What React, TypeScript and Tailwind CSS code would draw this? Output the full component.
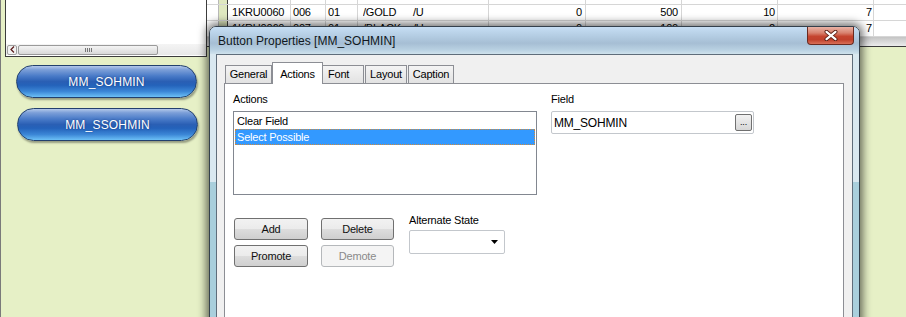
import React from "react";

function Cell({ w, children, right, pl, pr }: { w: string; children?: React.ReactNode; right?: boolean; pl?: string; pr?: string }) {
  return (
    <div className={`${w} ${right ? "justify-end" : "justify-start"} ${pl ?? ""} ${pr ?? ""} h-full flex items-center border-r border-[#d6d6d6] whitespace-nowrap overflow-hidden`}>
      {children}
    </div>
  );
}

function Row({ a, b, c, d, e, f, g, h, i }: { a: string; b: string; c: string; d: string; e: string; f: string; g: string; h: string; i: string }) {
  return (
    <div className="h-[16px] flex border-b border-[#d6d6d6] text-[11px] leading-[15px] text-black">
      <div className="w-[12px] h-full border-r border-[#b8b8b8] bg-white" />
      <div className="w-[9px] h-full border-r border-[#404040] bg-[#dfe8c0]" />
      <Cell w="w-[63px]" pl="pl-[4px]">{a}</Cell>
      <Cell w="w-[35px]" pl="pl-[2px]">{b}</Cell>
      <Cell w="w-[32px]" pl="pl-[2px]">{c}</Cell>
      <Cell w="w-[131px]" pl="pl-[5px]">
        <span className="inline-block w-[50px] overflow-hidden">{d}</span>
        <span>{e}</span>
      </Cell>
      <Cell w="w-[97px]" right pr="pr-[3px]">{f}</Cell>
      <Cell w="w-[96px]" right pr="pr-[3px]">{g}</Cell>
      <Cell w="w-[96px]" right pr="pr-[2px]">{h}</Cell>
      <Cell w="w-[96px]" right pr="pr-[1px]">{i}</Cell>
      <div className="flex-1 h-full" />
    </div>
  );
}

function Pill({ label, extra }: { label: string; extra?: string }) {
  return (
    <div
      className={`w-[181px] h-[33px] rounded-full border border-[#22406e] bg-[linear-gradient(to_bottom,#b3c8ea_0%,#7c9fd8_12%,#4a7bc8_32%,#2a5fb4_50%,#2462ba_62%,#3b86d6_82%,#6cc0f6_100%)] shadow-[1px_2px_2px_rgba(0,0,0,0.35)] flex items-center justify-center text-white text-[12px] tracking-[0.2px] [text-shadow:0_0_2px_rgba(0,30,90,0.6)] ${extra ?? ""}`}
    >
      {label}
    </div>
  );
}

function Btn({ label, disabled, w }: { label: string; disabled?: boolean; w: string }) {
  return (
    <div
      className={`${w} h-[22px] rounded-[3px] border flex items-center justify-center text-[11px] ${
        disabled
          ? "border-[#b5b8bb] bg-[#f4f4f4] text-[#8a8a8a]"
          : "border-[#707070] bg-[linear-gradient(to_bottom,#f2f2f2_0%,#ebebeb_50%,#dddddd_51%,#cfcfcf_100%)] text-[#101010]"
      }`}
    >
      {label}
    </div>
  );
}

export default function App() {
  return (
    <div className="relative w-[906px] h-[317px] overflow-hidden bg-[#e6f0c6] font-['Liberation_Sans',Arial,sans-serif] tracking-[-0.2px] flex">
      {/* Left pane */}
      <div className="w-[207px] h-full border-l border-[#7a7a7a] flex flex-col shrink-0">
        <div className="ml-[4px] w-[202px] h-[57px] bg-white border-x border-b border-[#3c3c3c] flex flex-col justify-end pb-[1px]">
          <div className="h-[11px] flex items-center bg-[linear-gradient(to_bottom,#f4f4f4,#e8e8e8)]">
            <div className="ml-[1px] w-[10px] h-[10px] border border-[#a0a0a0] rounded-[2px] bg-[#f2f2f2] flex items-center justify-center">
              <svg width="5" height="7" viewBox="0 0 5 7">
                <path d="M4 0.5 L1 3.5 L4 6.5" stroke="#5a1a1a" strokeWidth="1.2" fill="none" />
              </svg>
            </div>
            <div className="ml-[1px] w-[140px] h-[10px] border border-[#9a9a9a] rounded-[2px] bg-[linear-gradient(to_bottom,#f4f4f4,#d8d8d8)] flex items-center justify-center gap-[1px]">
              <div className="w-[1px] h-[4px] bg-[#777]" />
              <div className="w-[1px] h-[4px] bg-[#777]" />
              <div className="w-[1px] h-[4px] bg-[#777]" />
              <div className="w-[1px] h-[4px] bg-[#777]" />
            </div>
          </div>
        </div>
        <div className="flex flex-col pl-[15px] pt-[8px] gap-[10px]">
          <Pill label="MM_SOHMIN" />
          <Pill label="MM_SSOHMIN" extra="ml-[1px]" />
        </div>
      </div>

      {/* Right pane: table behind */}
      <div className="flex-1 flex flex-col">
        <div className="h-[37px] overflow-hidden bg-white">
          <div className="-mt-[11px]">
            <Row a="1KRU0060" b="005" c="01" d="/PLATINUM" e="/U" f="1" g="100" h="2" i="7" />
            <Row a="1KRU0060" b="006" c="01" d="/GOLD" e="/U" f="0" g="500" h="10" i="7" />
            <Row a="1KRU0060" b="007" c="01" d="/BLACK" e="/U" f="0" g="100" h="2" i="7" />
          </div>
        </div>
        <div className="h-[10px] bg-[linear-gradient(to_bottom,#c4c4c4,#ececec)] border-b border-[#3c3c3c]" />
        <div className="flex-1" />
      </div>

      {/* Dialog window */}
      <div className="absolute left-[209px] top-[26px] w-[651px] h-[300px] rounded-t-[7px] border border-[#34404c] shadow-[0_0_9px_3px_rgba(0,0,0,0.55)] bg-[linear-gradient(to_bottom,#d9e8f0_0px,#d9e8f0_155px,#a9cfdc_155px,#a9cfdc_100%)] flex flex-col">
        {/* Title bar */}
        <div className="relative h-[27px] shrink-0 rounded-t-[6px] bg-[linear-gradient(to_bottom,#c6def4_0%,#b3cce2_35%,#a6bed4_60%,#b9d1e2_85%,#cfe2ec_100%)] flex items-center pl-[8px]">
          <span className="text-[12px] text-[#101820] tracking-[0px]">Button Properties [MM_SOHMIN]</span>
          <div className="absolute right-[5px] top-0 w-[47px] h-[18px] rounded-b-[4px] border border-t-0 border-[#6a2a20] bg-[linear-gradient(to_bottom,#eab3a6_0%,#d8826e_35%,#c5452f_55%,#c0412c_75%,#d97058_100%)] flex items-center justify-center">
            <svg width="14" height="11" viewBox="0 0 14 11">
              <path d="M2.5 1.8 L11.5 9.2 M11.5 1.8 L2.5 9.2" stroke="#5a1e14" strokeWidth="4" strokeLinecap="round" />
              <path d="M2.5 1.8 L11.5 9.2 M11.5 1.8 L2.5 9.2" stroke="#ffffff" strokeWidth="2.2" strokeLinecap="round" />
            </svg>
          </div>
        </div>
        {/* Client area */}
        <div className="ml-[6px] w-[637px] flex-1 bg-[#f0f0f0] border-x border-t border-[#5f6d7a] pt-[7px] pl-[7px] flex flex-col">
          {/* Tabs */}
          <div className="h-[21px] flex items-end text-[11px] text-black">
            <div className="ml-[1px] w-[47px] h-[18px] border border-b-0 border-[#8c8e94] bg-[linear-gradient(to_bottom,#f4f4f4,#e2e2e2)] flex items-center justify-center">General</div>
            <div className="relative z-10 w-[51px] h-[22px] -mb-[1px] border border-b-0 border-[#8c8e94] bg-white flex items-start pt-[3px] justify-center">Actions</div>
            <div className="w-[41px] h-[18px] border border-b-0 border-l-0 border-[#8c8e94] bg-[linear-gradient(to_bottom,#f4f4f4,#e2e2e2)] flex items-center justify-start pl-[5px]">Font</div>
            <div className="ml-[1px] w-[42px] h-[18px] border border-b-0 border-[#8c8e94] bg-[linear-gradient(to_bottom,#f4f4f4,#e2e2e2)] flex items-center justify-center">Layout</div>
            <div className="ml-[1px] w-[46px] h-[18px] border border-b-0 border-[#8c8e94] bg-[linear-gradient(to_bottom,#f4f4f4,#e2e2e2)] flex items-center justify-center">Caption</div>
          </div>
          {/* Tab panel */}
          <div className="w-[620px] flex-1 bg-white border border-b-0 border-[#8c8e94] pl-[8px] pt-[8px] text-[11px] text-black">
            <div className="flex">
              <div className="w-[304px]">
                <div className="h-[14px] leading-[14px]">Actions</div>
                <div className="mt-[5px] h-[84px] border border-[#828790] bg-white pt-[1px]">
                  <div className="h-[16px] leading-[16px] pl-[3px]">Clear Field</div>
                  <div className="mx-[1px] h-[16px] leading-[14px] pl-[1px] bg-[#3399ff] text-white border border-dotted border-[#d08a3c]">Select Possible</div>
                </div>
              </div>
              <div className="ml-[14px] w-[203px]">
                <div className="h-[14px] leading-[14px]">Field</div>
                <div className="mt-[5px] h-[23px] rounded-[2px] border border-[#c3c7cc] bg-white flex items-center justify-between pl-[2px] pr-[1px]">
                  <span className="text-[12px]">MM_SOHMIN</span>
                  <div className="w-[17px] h-[17px] rounded-[2px] border border-[#707070] bg-[linear-gradient(to_bottom,#f2f2f2,#d6d6d6)] flex items-end justify-center pb-[3px] text-[9px] leading-[9px]">...</div>
                </div>
              </div>
            </div>
            <div className="mt-[18px] flex">
              <div className="ml-[1px] mt-[5px] grid grid-cols-[74px_73px] gap-x-[13px] gap-y-[5px]">
                <Btn label="Add" w="w-[74px]" />
                <Btn label="Delete" w="w-[73px]" />
                <Btn label="Promote" w="w-[74px]" />
                <Btn label="Demote" w="w-[73px]" disabled />
              </div>
              <div className="ml-[15px]">
                <div className="h-[14px] leading-[14px]">Alternate State</div>
                <div className="mt-[3px] w-[96px] h-[24px] rounded-[2px] border border-[#c3c7cc] bg-white flex items-center justify-end pr-[6px]">
                  <svg width="7" height="4" viewBox="0 0 7 4">
                    <path d="M0 0 L7 0 L3.5 4 Z" fill="#000" />
                  </svg>
                </div>
              </div>
            </div>
          </div>
        </div>
      </div>
    </div>
  );
}
